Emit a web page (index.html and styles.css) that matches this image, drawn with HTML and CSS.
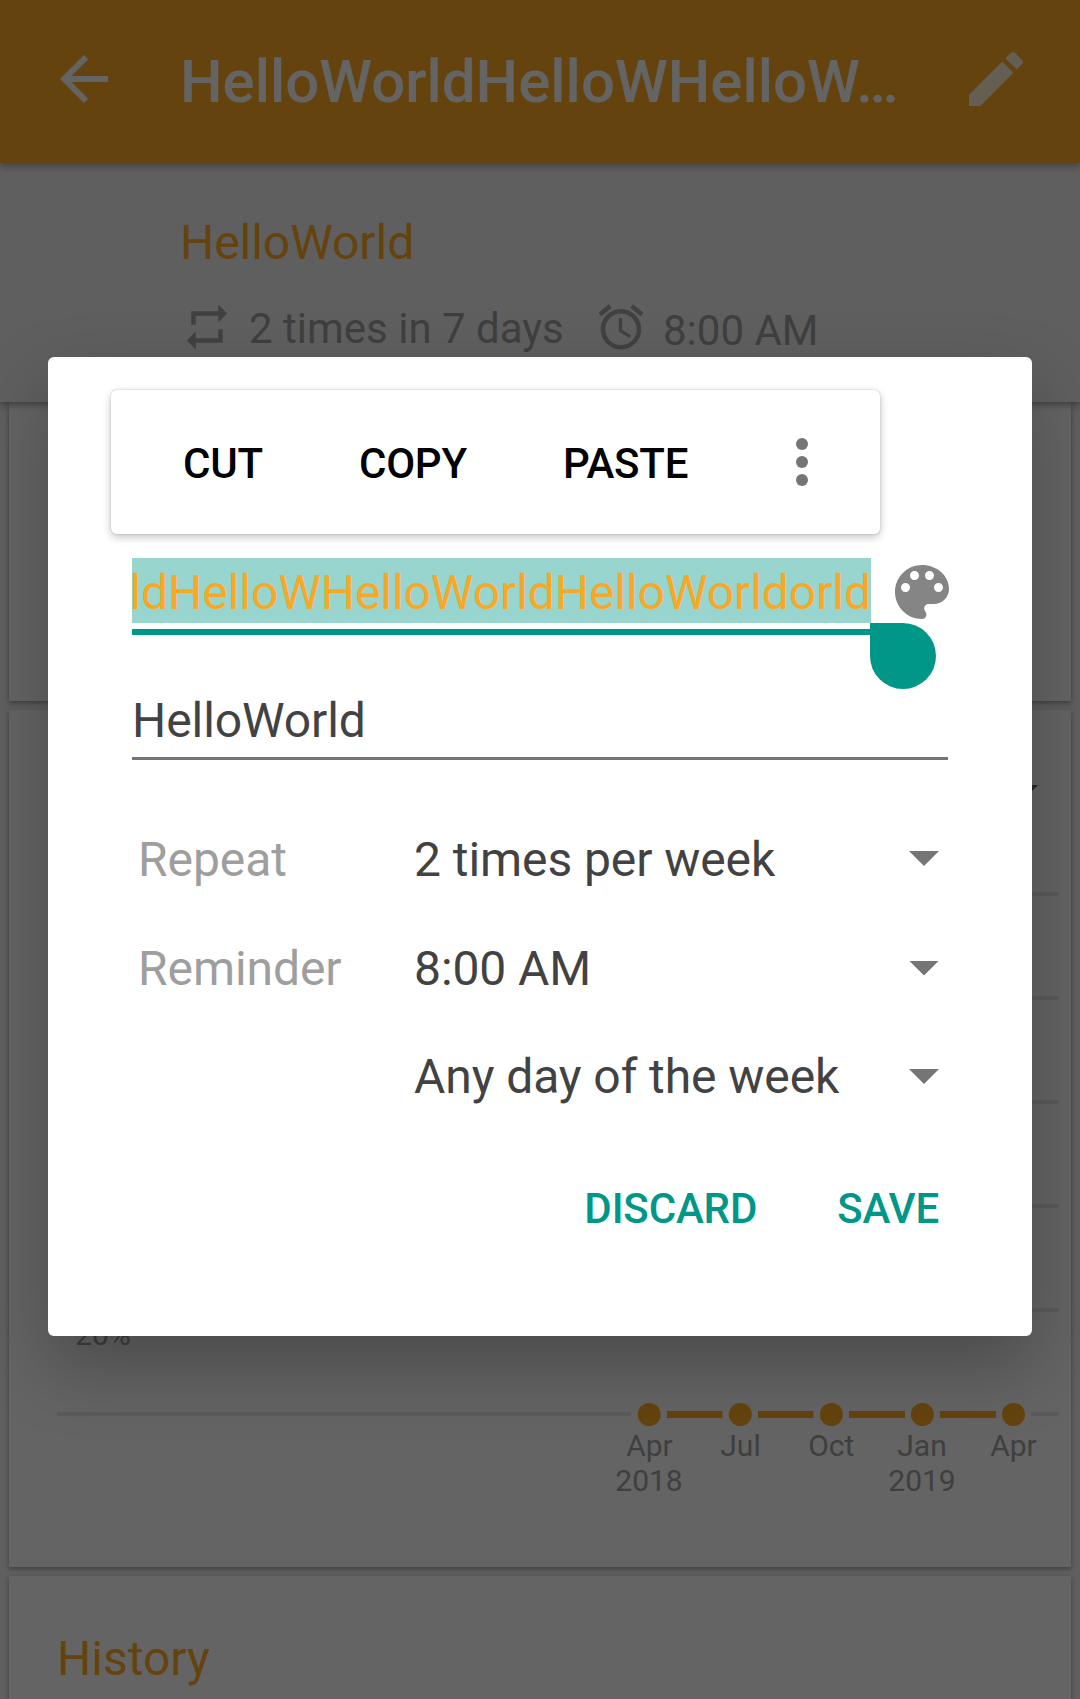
FILE: index.html
```html
<!DOCTYPE html>
<html lang="en">
<head>
<meta charset="utf-8">
<title>HelloWorld</title>
<link rel="stylesheet" href="styles.css">
</head>
<body>
<div class="screen">
  <header class="appbar">
    <svg class="icon" viewBox="0 0 24 24"><path fill="#fafafa" d="M20 11H7.83l5.59-5.59L12 4l-8 8 8 8 1.41-1.41L7.83 13H20v-2z"/></svg>
    <h1 class="title">HelloWorldHelloWHelloW…</h1>
    <svg class="icon edit" viewBox="0 0 24 24"><path d="M3 17.25V21h3.75L17.81 9.94l-3.75-3.75L3 17.25zM20.71 7.04c.39-.39.39-1.02 0-1.41l-2.34-2.34c-.39-.39-1.02-.39-1.41 0l-1.83 1.83 3.75 3.75 1.83-1.83z"/></svg>
  </header>
  <section class="summary">
    <div class="question">HelloWorld</div>
    <div class="meta">
      <svg class="meta-icon" viewBox="0 0 24 24"><path d="M7 7h10v3l4-4-4-4v3H5v6h2V7zm10 10H7v-3l-4 4 4 4v-3h12v-6h-2v4z"/></svg>
      <span class="frequency">2 times in 7 days</span>
      <svg class="meta-icon" viewBox="0 0 24 24"><path d="M22 5.72l-4.6-3.86-1.29 1.53 4.6 3.86L22 5.72zM7.88 3.39L6.6 1.86 2 5.71l1.29 1.53 4.59-3.85zM12.5 8H11v6l4.75 2.85.75-1.23-4-2.37V8zM12 4c-4.97 0-9 4.03-9 9s4.02 9 9 9c4.97 0 9-4.03 9-9s-4.03-9-9-9zm0 16c-3.87 0-7-3.13-7-7s3.13-7 7-7 7 3.13 7 7-3.13 7-7 7z"/></svg>
      <span class="time">8:00 AM</span>
    </div>
  </section>
  <main class="cards">
    <section class="card overview"></section>
    <section class="card score">
      <svg class="chart" viewBox="9 710 1062 857">
        <path fill="#616161" d="M1008 785h30l-15 15z"/>
        <g class="grid">
          <path d="M57 894H1059M57 998H1059M57 1102H1059M57 1206H1059M57 1310H1059"/>
          <path d="M57 1414H631M1031 1414H1059"/>
        </g>
        <g class="series">
          <path d="M667 1414.5h55.5M758 1414.5h55.5M849 1414.5h56M940 1414.5h56"/>
          <circle cx="649.2" cy="1414.5" r="11.5"/>
          <circle cx="740.3" cy="1414.5" r="11.5"/>
          <circle cx="831.4" cy="1414.5" r="11.5"/>
          <circle cx="922.4" cy="1414.5" r="11.5"/>
          <circle cx="1013.5" cy="1414.5" r="11.5"/>
        </g>
        <g class="labels">
          <text x="103" y="1345">20%</text>
          <text x="649.5" y="1456">Apr</text>
          <text x="649" y="1491">2018</text>
          <text x="740.5" y="1456">Jul</text>
          <text x="831.3" y="1456">Oct</text>
          <text x="922" y="1456">Jan</text>
          <text x="922" y="1491">2019</text>
          <text x="1013.5" y="1456">Apr</text>
        </g>
      </svg>
    </section>
    <section class="card history"><h2 class="heading">History</h2></section>
  </main>
  <div class="scrim">
    <div class="dialog">
      <div class="name-row">
        <div class="name-field"><div class="selection"><span class="name-text">ldHelloWHelloWorldHelloWorldorld</span></div></div>
        <svg class="icon palette" viewBox="0 0 24 24"><path d="M12 3c-4.970 0-9 4.030-9 9s4.030 9 9 9c.83 0 1.500-.67 1.500-1.500 0-.39-.15-.74-.39-1.010-.23-.26-.38-.61-.38-.99 0-.83.67-1.500 1.500-1.500H16c2.760 0 5-2.240 5-5 0-4.420-4.030-8-9-8zm-5.500 9c-.83 0-1.500-.67-1.500-1.500S5.670 9 6.500 9 8 9.670 8 10.500 7.330 12 6.500 12zm3-4C8.670 8 8 7.330 8 6.500S8.670 5 9.500 5s1.500.67 1.500 1.500S10.330 8 9.500 8zm5 0c-.83 0-1.500-.67-1.500-1.500S13.670 5 14.500 5s1.500.67 1.500 1.500S15.330 8 14.500 8zm3 4c-.83 0-1.500-.67-1.500-1.500S16.670 9 17.500 9s1.500.67 1.500 1.500-.67 1.500-1.500 1.500z"/></svg>
      </div>
      <div class="question-field">HelloWorld</div>
      <div class="options">
        <div class="option"><span class="label">Repeat</span><span class="value">2 times per week</span><i class="caret"></i></div>
        <div class="option"><span class="label">Reminder</span><span class="value">8:00 AM</span><i class="caret"></i></div>
        <div class="option"><span class="label"></span><span class="value">Any day of the week</span><i class="caret"></i></div>
      </div>
      <div class="actions"><span>DISCARD</span><span>SAVE</span></div>
      <div class="handle"></div>
      <div class="toolbar">
        <span>CUT</span><span>COPY</span><span>PASTE</span>
        <div class="overflow"><i></i><i></i><i></i></div>
      </div>
    </div>
  </div>
</div>
</body>
</html>
```
FILE: styles.css
```css
* { box-sizing: border-box; }

body {
  margin: 0;
  font-family: Roboto, "Liberation Sans", sans-serif;
  font-size: 48px;
  background: #eee;
}

.screen {
  position: relative;
  width: 1080px;
  height: 1699px;
  overflow: hidden;
  background: #eee;
}

.icon { width: 72px; height: 72px; flex: none; }

.appbar {
  position: relative;
  z-index: 2;
  display: flex;
  height: 163px;
  padding: 43px 48px 0;
  background: #f9a825;
  box-shadow: 0 3px 8px rgba(0, 0, 0, .35);
}

.title {
  flex: 1;
  margin: 0 0 0 60px;
  font-size: 60px;
  font-weight: 500;
  line-height: 77px;
  white-space: nowrap;
  color: #fafafa;
}

.edit { fill: #fcead0; }

.summary {
  position: relative;
  z-index: 1;
  height: 239px;
  padding: 50px 0 0 180px;
  background: #eee;
  box-shadow: 0 3px 7px rgba(0, 0, 0, .35);
}

.question { line-height: 60px; letter-spacing: -.05px; color: #f9a825; }

.meta {
  display: flex;
  margin-top: 27px;
  font-size: 42px;
  line-height: 54px;
  color: #9e9e9e;
}

.meta-icon { width: 54px; height: 54px; flex: none; fill: #a2a2a2; }
.frequency { width: 345px; margin-left: 15px; padding-top: 2px; white-space: nowrap; }
.time { margin-left: 15px; padding-top: 4px; }

.cards {
  display: flex;
  flex-direction: column;
  gap: 9px;
  padding: 0 9px;
}

.card { background: #fafafa; box-shadow: 0 2px 5px rgba(0, 0, 0, .35); }
.overview { height: 299px; }
.score { height: 857px; }
.history { height: 150px; padding: 53px 48px 0; }

.heading {
  margin: 0;
  font-size: 48px;
  font-weight: 400;
  line-height: 60px;
  color: #f9a825;
}

.chart { display: block; width: 1062px; height: 857px; }
.grid { stroke: #e0e0e0; stroke-width: 3.5; }
.series { fill: #f9a825; stroke: none; }
.series path { stroke: #f9a825; stroke-width: 7; }
.labels { font-size: 30px; fill: #9e9e9e; text-anchor: middle; }

.scrim {
  position: absolute;
  inset: 0;
  z-index: 3;
  padding: 357px 48px 0;
  background: rgba(0, 0, 0, .6);
}

.dialog {
  position: relative;
  height: 979px;
  padding: 199px 74px 0 84px;
  border-radius: 6px;
  background: #fff;
  box-shadow: 0 30px 70px rgba(0, 0, 0, .25);
  color: #424242;
}

.name-row { display: flex; justify-content: space-between; height: 79px; }

.name-field {
  width: 739px;
  margin-top: 2px;
  height: 77px;
  border-bottom: 6px solid #009688;
}

.selection {
  display: flex;
  justify-content: flex-end;
  height: 65px;
  padding-top: 4px;
  overflow: hidden;
  background: #99d5cf;
}

.name-text {
  line-height: 61px;
  letter-spacing: -.06px;
  white-space: nowrap;
  color: #f9a825;
}

.palette { fill: #858585; }

.question-field {
  width: 816px;
  height: 69px;
  margin-top: 56px;
  border-bottom: 3px solid #757575;
  line-height: 60px;
  letter-spacing: -.08px;
}

.options { margin-top: 46px; letter-spacing: -.07px; }
.option { display: flex; align-items: center; height: 109px; padding: 0 19px 0 6px; }
.option:first-child { height: 107px; }
.option:nth-child(2) { padding-top: 1px; }
.option:first-child .caret { margin-bottom: 2px; }
.label { width: 276px; color: #9e9e9e; }
.value { flex: 1; white-space: nowrap; }
.caret {
  width: 30px;
  height: 15px;
  background: #757575;
  clip-path: polygon(0 0, 100% 0, 50% 100%);
}

.actions {
  display: flex;
  justify-content: flex-end;
  gap: 80px;
  margin-top: 53px;
  padding-right: 19px;
  font-size: 42px;
  font-weight: 500;
  line-height: 50px;
  letter-spacing: -.15px;
  color: #009688;
}

.handle {
  position: absolute;
  top: 266px;
  left: 822px;
  width: 66px;
  height: 66px;
  border-radius: 0 33px 33px 33px;
  background: #009688;
}

.toolbar {
  position: absolute;
  top: 33px;
  left: 63px;
  display: flex;
  align-items: center;
  gap: 96px;
  width: 769px;
  height: 144px;
  padding: 0 72px;
  border-radius: 6px;
  background: #fff;
  box-shadow: 0 3px 8px rgba(0, 0, 0, .24), 0 0 2px rgba(0, 0, 0, .2);
  font-size: 42px;
  font-weight: 500;
  letter-spacing: -.2px;
  color: #000;
}

.toolbar span { padding-top: 3px; }

.overflow { display: flex; flex-direction: column; gap: 6px; margin-left: auto; }
.overflow i { width: 12px; height: 12px; border-radius: 50%; background: #757575; }
```
